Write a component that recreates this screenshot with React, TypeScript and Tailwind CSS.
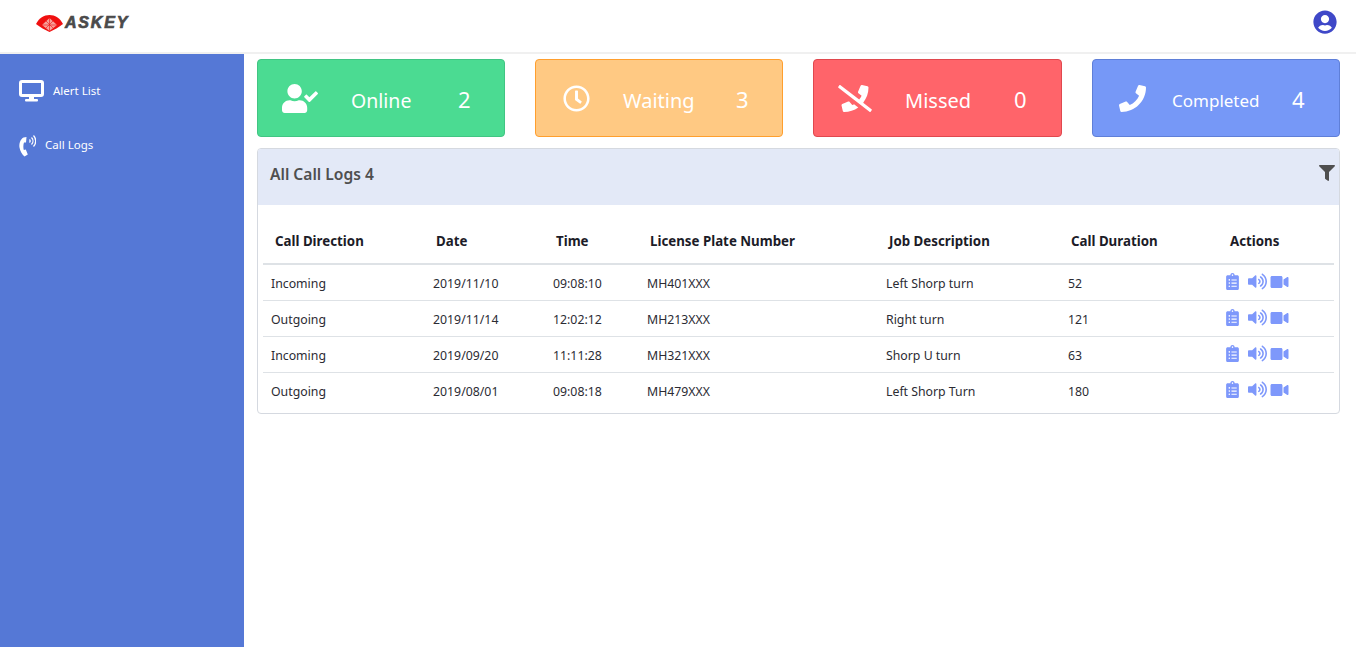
import { FaClipboardList, FaFilter, FaPhone, FaPhoneSlash, FaRegClock, FaUserCheck, FaUserCircle, FaVideo, FaVolumeUp } from 'react-icons/fa';

const cards = [
  { label: 'Online', value: 2, icon: <FaUserCheck className="w-[36px] h-[29px]" />, box: 'w-[248px] bg-[#4bdb92] border-[#41c583]', iconBox: 'w-[93px] pl-[24px]', labelBox: 'w-[107px] text-[19.5px]' },
  { label: 'Waiting', value: 3, icon: <FaRegClock className="w-[27px] h-[27px]" />, box: 'w-[248px] bg-[#ffc983] border-[#ff9f2e]', iconBox: 'w-[87px] pl-[27px]', labelBox: 'w-[113px] text-[20px]' },
  { label: 'Missed', value: 0, icon: <FaPhoneSlash className="w-[34px] h-[27px]" />, box: 'w-[249px] bg-[#ff646a] border-[#e0484e]', iconBox: 'w-[91px] pl-[24px]', labelBox: 'w-[109px] text-[20px]' },
  { label: 'Completed', value: 4, icon: <FaPhone className="w-[27px] h-[27px]" />, box: 'w-[248px] bg-[#7698f7] border-[#5f7fd8]', iconBox: 'w-[79px] pl-[26px]', labelBox: 'w-[120px] text-[17px]' },
];

const rows = [
  ['Incoming', '2019/11/10', '09:08:10', 'MH401XXX', 'Left Shorp turn', '52'],
  ['Outgoing', '2019/11/14', '12:02:12', 'MH213XXX', 'Right turn', '121'],
  ['Incoming', '2019/09/20', '11:11:28', 'MH321XXX', 'Shorp U turn', '63'],
  ['Outgoing', '2019/08/01', '09:08:18', 'MH479XXX', 'Left Shorp Turn', '180'],
];

const headers = ['Call Direction', 'Date', 'Time', 'License Plate Number', 'Job Description', 'Call Duration', 'Actions'];

function Logo() {
  return (
    <div className="flex items-center gap-[2px]">
      <svg width="27" height="17" viewBox="0 0 27 17">
        <path d="M0 9 C3 3 8 0 13.5 0 C19 0 24 3 27 9 C23 12 18 15 13.5 17 C9 15 4 12 0 9 Z" fill="#f01010" />
        <path d="M13.5 3 L21 10 L13.5 16 L6 10 Z" fill="#f7a09a" />
        <path d="M13.5 3 V16 M10 6 L17 13 M17 6 L10 13 M6 10 H21" stroke="#f01010" strokeWidth="0.6" fill="none" />
      </svg>
      <span className="font-['Liberation_Sans',sans-serif] text-[16px] leading-none font-bold italic tracking-[1.8px] text-[#4a4a4a] [-webkit-text-stroke:0.7px_#4a4a4a]">ASKEY</span>
    </div>
  );
}

function MonitorIcon() {
  return (
    <svg width="25" height="22" viewBox="0 0 25 22" fill="none">
      <rect x="1.5" y="1.5" width="22" height="14" rx="1.5" stroke="white" strokeWidth="3" />
      <path d="M10 16.5h5v2.5h-5z" fill="white" />
      <rect x="6" y="19" width="13" height="2.5" rx="1" fill="white" />
    </svg>
  );
}

function PhoneTalkIcon() {
  return (
    <svg width="17" height="23" viewBox="0 0 17 23" fill="none">
      <path d="M4.5 3.5 C1 5.5 0 10 0.5 13.5 C1 17 3 20.5 5.5 22.5 L8.8 20.5 L6.8 15.5 L4.8 16 C4.2 14 4.2 10.5 5 8.5 L7 8.5 L7.5 3 Z" fill="white" />
      <path d="M10.5 5.5 a2 2 0 0 1 0 3 M12.5 3.5 a5 5 0 0 1 0 7 M14.5 1.5 a8 8 0 0 1 0 11" stroke="white" strokeWidth="1.3" />
    </svg>
  );
}

export default function App() {
  return (
    <div className="w-[1356px] h-[647px] bg-white overflow-hidden font-['Noto_Sans',sans-serif]">
      {/* Header */}
      <div className="h-[54px] border-b-2 border-[#f0f0f0] flex items-center justify-between pl-[36px] pr-[19px]">
        <div className="-mt-[6px]"><Logo /></div>
        <FaUserCircle className="w-[24px] h-[24px] -mt-[8px] text-[#3f48c8]" />
      </div>

      <div className="flex h-[593px]">
        {/* Sidebar */}
        <div className="w-[244px] bg-[#5578d6] text-white text-[11.5px]">
          <div className="h-[54px] pt-[26px] pl-[19px] flex items-start">
            <MonitorIcon />
            <span className="ml-[9px] -mt-[1px] leading-[24px]">Alert List</span>
          </div>
          <div className="pt-[26px] pl-[19px] flex items-start">
            <PhoneTalkIcon />
            <span className="ml-[9px] -mt-[1px] leading-[24px]">Call Logs</span>
          </div>
        </div>

        {/* Main */}
        <div className="flex-1 pt-[5px] pl-[13px] pr-[16px]">
          <div className="flex gap-[30px]">
            {cards.map((c) => (
              <div key={c.label} className={`h-[78px] border rounded-[4px] flex items-center text-white ${c.box}`}>
                <div className={`${c.iconBox} shrink-0`}>{c.icon}</div>
                <div className={`${c.labelBox} pt-[5px]`}>{c.label}</div>
                <div className="text-[22px] pt-[3px]">{c.value}</div>
              </div>
            ))}
          </div>

          <div className="mt-[11px] h-[266px] border border-[#d5d9e0] rounded-[4px] overflow-hidden">
            <div className="h-[56px] bg-[#e3e9f7] flex items-center justify-between pl-[12px] pr-[4px]">
              <span className="text-[15.6px] font-semibold text-[#4f4f4f] -mt-[4px]">All Call Logs 4</span>
              <FaFilter className="w-[16px] h-[16px] -mt-[9px] text-[#4f4f4f]" />
            </div>
            <div className="px-[5px]">
              <div className="grid grid-cols-[161px_120px_94px_239px_182px_159px_1fr] h-[60px] items-center border-b-2 border-[#dee2e6] pt-[15px] text-[13.3px] font-bold text-[#1c1c28]">
                {headers.map((h) => (
                  <div key={h} className="pl-[12px]">{h}</div>
                ))}
              </div>
              {rows.map((r, i) => (
                <div key={i} className={`grid grid-cols-[161px_120px_94px_239px_182px_159px_1fr] h-[36px] items-center text-[12.3px] text-[#2b2b33] border-b ${i < 3 ? 'border-[#dee2e6]' : 'border-transparent'}`}>
                  {r.map((v, j) => (
                    <div key={j} className={`pt-[4px] ${j === 0 ? 'pl-[8px]' : 'pl-[9px]'}`}>{v}</div>
                  ))}
                  <div className="pl-[8px] -mt-[2px] flex items-center text-[#7e98fb]">
                    <FaClipboardList className="w-[13px] h-[17px]" />
                    <FaVolumeUp className="ml-[9px] w-[19px] h-[17px]" />
                    <FaVideo className="ml-[3px] w-[19px] h-[16px]" />
                  </div>
                </div>
              ))}
            </div>
          </div>
        </div>
      </div>
    </div>
  );
}
